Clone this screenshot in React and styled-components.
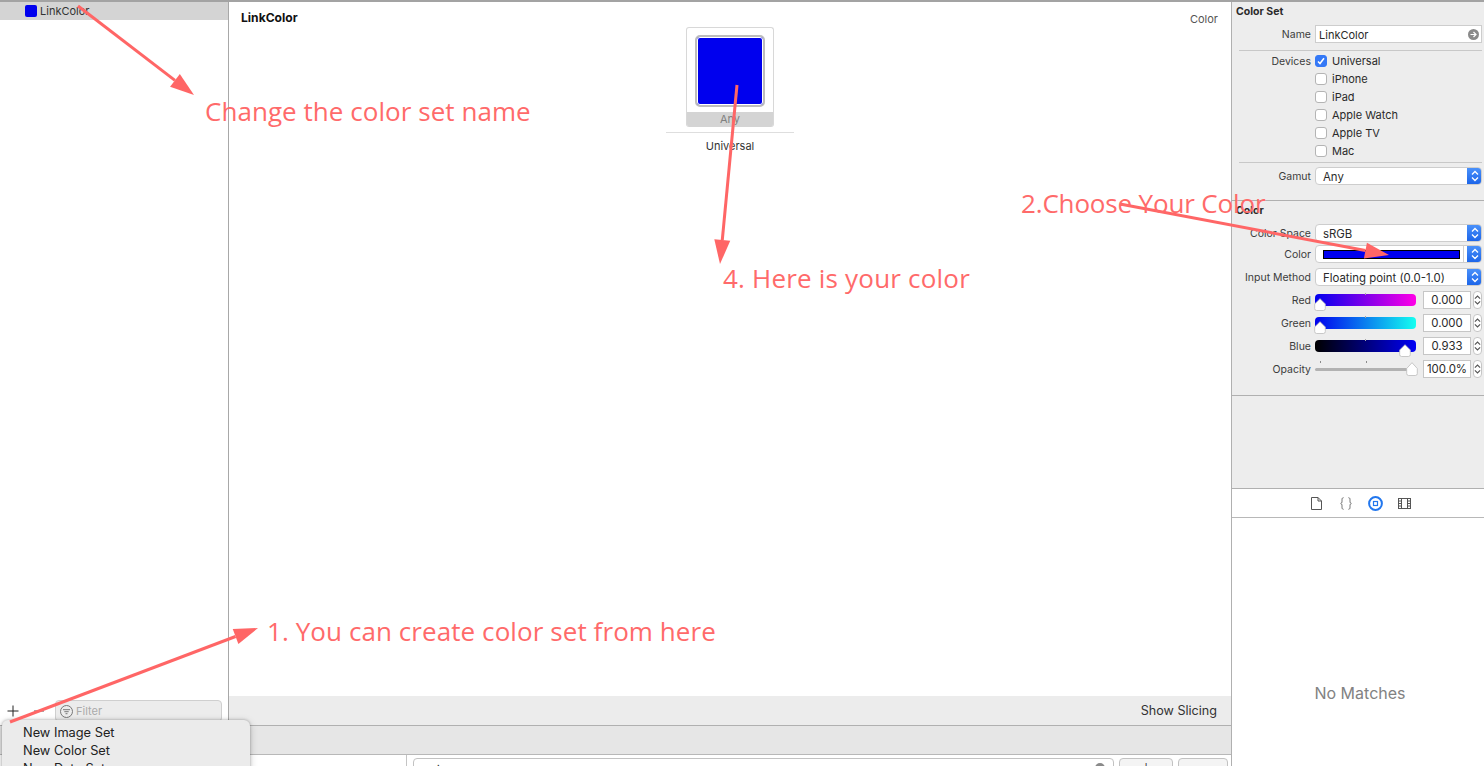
import React from 'react';
import styled, { createGlobalStyle } from 'styled-components';

const Global = createGlobalStyle`
  html, body { margin: 0; padding: 0; background: #fff; }
  body { font-family: "Inter", "Liberation Sans", sans-serif; font-size: 11px; color: #2a2a2a; }
  * { box-sizing: border-box; }
`;

const Page = styled.div`
  position: relative;
  width: 1484px;
  height: 766px;
  overflow: hidden;
  display: flex;
  flex-direction: column;
  border-top: 2px solid #a3a3a3;
`;
const Columns = styled.div`
  flex: 1;
  min-height: 0;
  display: flex;
`;
const Workspace = styled.div`
  width: 1232px;
  display: flex;
  flex-direction: column;
  border-right: 1px solid #b0b0b0;
`;
const Upper = styled.div`
  height: 724px;
  flex: none;
  display: flex;
  border-bottom: 1px solid #b0b0b0;
`;
const Sidebar = styled.aside`
  width: 229px;
  display: flex;
  flex-direction: column;
  justify-content: space-between;
  border-right: 1px solid #a8a8a8;
`;
const AssetRow = styled.div`
  height: 18px;
  background: #d4d4d4;
  display: flex;
  align-items: center;
  gap: 3px;
  padding-left: 25px;
  font-size: 11px;
  color: #333;
`;
const Swatch = styled.span`
  width: 12px;
  height: 12px;
  border-radius: 2px;
  background: #0000ee;
`;
const SidebarFooter = styled.div`
  height: 25px;
  padding: 0 6px 3px 7px;
  display: flex;
  align-items: center;
`;
const Glyph = styled.span`
  width: 26px;
  display: flex;
  color: #222;
`;
const FilterBox = styled.div`
  flex: 1;
  height: 22px;
  margin-left: -4px;
  display: flex;
  align-items: center;
  gap: 3px;
  padding-left: 4px;
  background: #ececec;
  border: 1px solid #cfcfcf;
  border-radius: 4px;
  color: #aaa;
  font-size: 11px;
`;
const Main = styled.main`
  flex: 1;
  display: flex;
  flex-direction: column;
  min-width: 0;
`;
const MainHeader = styled.div`
  height: 25px;
  padding: 5px 13px 0 12px;
  display: flex;
  justify-content: space-between;
  align-items: center;
  font-size: 11px;
`;
const HeaderTitle = styled.strong`
  font-size: 12.1px;
  font-weight: 700;
  color: #111;
`;
const HeaderKind = styled.span`
  color: #555;
  font-size: 11px;
  padding-top: 3px;
`;
const Canvas = styled.div`
  flex: 1;
  display: flex;
  flex-direction: column;
  align-items: center;
`;
const Well = styled.div`
  width: 88px;
  height: 100px;
  border: 1px solid #d8d8d8;
  border-bottom: 0;
  border-radius: 3px;
  overflow: hidden;
  display: flex;
  flex-direction: column;
  background: #fff;
`;
const WellBody = styled.div`
  flex: 1;
  padding: 7px 8px 0;
`;
const ColorChip = styled.div`
  width: 70px;
  height: 72px;
  background: #0000ee;
  border: 2px solid #bdbdbd;
  border-radius: 5px;
  box-shadow: inset 0 0 0 1px #fff;
`;
const WellLabel = styled.div`
  height: 15px;
  background: #d4d4d4;
  color: #808080;
  font-size: 11px;
  line-height: 15px;
  text-align: center;
`;
const CanvasRule = styled.div`
  width: 128px;
  height: 1px;
  margin-top: 5px;
  background: #dedede;
`;
const CanvasCaption = styled.div`
  margin-top: 6px;
  font-size: 11px;
  line-height: 15px;
  color: #333;
`;
const SlicingBar = styled.div`
  height: 29px;
  flex: none;
  background: #ececec;
  display: flex;
  align-items: center;
  justify-content: flex-end;
  padding-right: 14px;
  font-size: 12.6px;
  color: #333;
`;
const DebugBar = styled.div`
  height: 29px;
  flex: none;
  background: #e6e6e6;
  border-bottom: 1px solid #b8b8b8;
`;
const Console = styled.div`
  flex: 1;
  min-height: 0;
  display: flex;
  background: #fff;
  padding-left: 406px;
  overflow: hidden;
`;
const ConsoleRule = styled.div`
  width: 1px;
  background: #c4c4c4;
`;
const ConsoleTools = styled.div`
  flex: 1;
  display: flex;
  gap: 5px;
  padding: 3px 3px 0 6px;
`;
const ConsoleField = styled.div`
  flex: 1;
  height: 20px;
  border: 1px solid #c2c2c2;
  border-radius: 4px;
  padding: 4px 8px;
  display: flex;
  justify-content: space-between;
  font-size: 11px;
  line-height: 14px;
  color: #333;
`;
const ClearDot = styled.span`
  width: 10px;
  height: 10px;
  border-radius: 50%;
  background: #8a8a8a;
`;
const ConsoleButton = styled.div`
  width: ${p => p.$w}px;
  height: 20px;
  border: 1px solid #c2c2c2;
  border-radius: 4px;
  background: #f4f4f4;
  display: flex;
  justify-content: center;
  padding-top: 4px;
  font-size: 11px;
  line-height: 14px;
  color: #333;
`;

const Inspector = styled.aside`
  width: 252px;
  display: flex;
  flex-direction: column;
  background: #ededed;
`;
const Section = styled.section`
  height: ${p => p.$h}px;
  flex: none;
  padding: 3px 2px 0 0;
  border-bottom: 1px solid #b0b0b0;
`;
const SectionTitle = styled.h3`
  margin: 0 0 6px 4px;
  font-size: 10.5px;
  line-height: 14px;
  font-weight: 700;
  color: #2a2a2a;
`;
const Row = styled.div`
  display: grid;
  grid-template-columns: 79px 1fr;
  column-gap: 4px;
  align-items: ${p => (p.$top ? 'start' : 'center')};
  min-height: 18px;
  margin-top: ${p => p.$mt || 0}px;
`;
const Label = styled.label`
  display: block;
  height: 18px;
  text-align: right;
  font-size: 10.5px;
  line-height: 20px;
  color: #3c3c3c;
  white-space: nowrap;
`;
const TextField = styled.div`
  height: 18px;
  background: #fff;
  border: 1px solid #cdcdcd;
  padding: 1px 2px 0 3px;
  display: flex;
  align-items: center;
  justify-content: space-between;
  font-size: 11px;
  color: #2a2a2a;
`;
const Rule = styled.div`
  height: 1px;
  background: #c8c8c8;
  margin: ${p => p.$m || '7px 0 0'};
  margin-left: 7px;
`;
const CheckRow = styled.div`
  height: 18px;
  display: flex;
  align-items: center;
  gap: 5px;
  font-size: 11px;
  color: #2a2a2a;
`;
const Check = styled.span`
  width: 12px;
  height: 12px;
  border-radius: 3px;
  display: flex;
  align-items: center;
  justify-content: center;
  background: ${p => (p.$on ? '#3478f6' : '#fff')};
  border: 1px solid ${p => (p.$on ? '#3478f6' : '#b4b4b4')};
`;
const Select = styled.div`
  height: 18px;
  background: #fff;
  border: 1px solid #cdcdcd;
  border-radius: 4px;
  display: flex;
  align-items: center;
  position: relative;
  overflow: hidden;
  padding: 1px 0 0 7px;
  font-size: 11.4px;
  color: #2a2a2a;
`;
const SelectArrows = styled.span`
  position: absolute;
  right: -1px;
  top: -1px;
  bottom: -1px;
  width: 15px;
  background: linear-gradient(#4c93fb, #1a63e8);
  display: flex;
  align-items: center;
  justify-content: center;
`;
const ColorBar = styled.span`
  width: 137px;
  height: 9px;
  background: #0000ee;
  border: 1px solid #000;
`;
const ColorDivider = styled.span`
  position: absolute;
  right: 17px;
  top: 0;
  bottom: 0;
  width: 1px;
  background: #d0d0d0;
`;
const SliderGrid = styled.div`
  display: grid;
  grid-template-columns: 101px 55px 11px;
  align-items: center;
`;
const SliderWrap = styled.div`
  position: relative;
  height: 18px;
  display: flex;
  align-items: center;
`;
const Track = styled.div`
  width: 100%;
  height: 12px;
  border-radius: 4px;
  background: ${p => p.$bg};
`;
const ThinTrack = styled.div`
  width: 100%;
  height: 3px;
  border-radius: 2px;
  background: #b2b2b2;
`;
const Tick = styled.i`
  position: absolute;
  left: ${p => p.$x}px;
  top: ${p => p.$y}px;
  width: 1px;
  height: 2px;
  background: ${p => p.$c};
`;
const Thumb = styled.svg`
  position: absolute;
  left: ${p => p.$x}px;
  top: ${p => p.$y}px;
`;
const NumField = styled.div`
  height: 18px;
  margin-left: 7px;
  width: 48px;
  background: #fff;
  border: 1px solid #c6c6c6;
  font-size: 11.4px;
  line-height: 17px;
  text-align: center;
  color: #2a2a2a;
`;
const Stepper = styled.div`
  width: 9px;
  height: 18px;
  margin-left: 2px;
  background: #fff;
  border: 1px solid #c6c6c6;
  border-radius: 4px;
  display: flex;
  align-items: center;
  justify-content: center;
`;
const Spacer = styled.div`
  flex: none;
  height: 93px;
  border-bottom: 1px solid #b0b0b0;
`;
const TabBar = styled.nav`
  height: 29px;
  flex: none;
  background: #fff;
  border-bottom: 1px solid #b8b8b8;
  display: flex;
  align-items: center;
  padding: 1px 0 0 76px;
  gap: 13.5px;
`;
const TabIcon = styled.span`
  width: 16px;
  height: 16px;
  display: flex;
  align-items: center;
  justify-content: center;
`;
const Library = styled.div`
  flex: 1;
  background: #fff;
  display: flex;
  align-items: center;
  justify-content: center;
  padding: 102px 0 0 4px;
  font-size: 16px;
  color: #828282;
`;
const Menu = styled.div`
  position: absolute;
  left: 2px;
  top: 718px;
  width: 248px;
  height: 70px;
  padding-top: 4px;
  background: #ebebeb;
  border-radius: 6px;
  box-shadow: 0 0 3px rgba(0,0,0,.3), 0 2px 8px rgba(0,0,0,.18);
`;
const MenuItem = styled.div`
  height: 18px;
  line-height: 18px;
  padding-left: 21px;
  font-size: 12.8px;
  color: #222;
`;
const Note = styled.div`
  position: absolute;
  left: ${p => p.$x}px;
  top: ${p => p.$y}px;
  font-family: "Open Sans", "Liberation Sans", sans-serif;
  font-size: 26px;
  line-height: 30px;
  letter-spacing: ${p => p.$ls}px;
  color: #ff6a6a;
  white-space: nowrap;
`;
const ArrowLayer = styled.svg`
  position: absolute;
  left: 0;
  top: -2px;
  pointer-events: none;
`;

const Updown = ({ color = '#fff', w = 8 }) => (
  <svg width={w} height="12" viewBox="0 0 8 12" fill="none" stroke={color} strokeWidth="1.3" style={{ flex: 'none' }}>
    <path d="M1 4.5 4 1.5 7 4.5M1 7.5 4 10.5 7 7.5" />
  </svg>
);

const Arrow = ({ x1, y1, x2, y2 }) => {
  const a = Math.atan2(y2 - y1, x2 - x1);
  const len = 24, w = 8;
  const bx = x2 - Math.cos(a) * len, by = y2 - Math.sin(a) * len;
  const px = -Math.sin(a) * w, py = Math.cos(a) * w;
  return (
    <g fill="#ff6666" stroke="#ff6666">
      <line x1={x1} y1={y1} x2={bx} y2={by} strokeWidth="3" />
      <polygon stroke="none" points={`${x2},${y2} ${bx + px},${by + py} ${bx - px},${by - py}`} />
    </g>
  );
};

const devices = [['Universal', true], ['iPhone'], ['iPad'], ['Apple Watch'], ['Apple TV'], ['Mac']];
const sliders = [
  { name: 'Red', bg: 'linear-gradient(90deg,#0000ee,#ff00e6)', val: '0.000', x: -1 },
  { name: 'Green', bg: 'linear-gradient(90deg,#0000ee,#14fff0)', val: '0.000', x: -1 },
  { name: 'Blue', bg: 'linear-gradient(90deg,#000,#0000f5)', val: '0.933', x: 84 },
];

export default function App() {
  return (
    <Page>
      <Global />
      <Columns>
        <Workspace>
          <Upper>
            <Sidebar>
              <AssetRow><Swatch />LinkColor</AssetRow>
              <SidebarFooter>
                <Glyph>
                  <svg width="12" height="12" viewBox="0 0 12 12" stroke="#222" strokeWidth="1"><path d="M6 .5v11M.5 6h11" /></svg>
                </Glyph>
                <Glyph>
                  <svg width="12" height="12" viewBox="0 0 12 12" stroke="#555" strokeWidth="1"><path d="M1 6h10" /></svg>
                </Glyph>
                <FilterBox>
                  <svg width="13" height="13" viewBox="0 0 13 13" fill="none" stroke="#777" strokeWidth="1">
                    <circle cx="6.500" cy="6.500" r="6" /><path d="M3 4.700h7M4.300 6.700h4.400M5.500 8.700h2" />
                  </svg>
                  Filter
                </FilterBox>
              </SidebarFooter>
            </Sidebar>
            <Main>
              <MainHeader>
                <HeaderTitle>LinkColor</HeaderTitle>
                <HeaderKind>Color</HeaderKind>
              </MainHeader>
              <Canvas>
                <Well>
                  <WellBody><ColorChip /></WellBody>
                  <WellLabel>Any</WellLabel>
                </Well>
                <CanvasRule />
                <CanvasCaption>Universal</CanvasCaption>
              </Canvas>
              <SlicingBar>Show Slicing</SlicingBar>
            </Main>
          </Upper>
          <DebugBar />
          <Console>
            <ConsoleRule />
            <ConsoleTools>
              <ConsoleField>Quick<ClearDot /></ConsoleField>
              <ConsoleButton $w={54}>‹ | ›</ConsoleButton>
              <ConsoleButton $w={50}>Done</ConsoleButton>
            </ConsoleTools>
          </Console>
        </Workspace>
        <Inspector>
          <Section $h={199}>
            <SectionTitle>Color Set</SectionTitle>
            <Row>
              <Label>Name</Label>
              <TextField>
                LinkColor
                <svg width="11" height="11" viewBox="0 0 11 11">
                  <circle cx="5.500" cy="5.500" r="5.500" fill="#8a8a8a" />
                  <path d="M2.500 5.500h5.500M5.500 3 8 5.500 5.500 8" stroke="#fff" strokeWidth="1.200" fill="none" />
                </svg>
              </TextField>
            </Row>
            <Rule />
            <Row $mt={1} $top>
              <Label>Devices</Label>
              <div>
                {devices.map(([d, on]) => (
                  <CheckRow key={d}>
                    <Check $on={on}>
                      {on && (
                        <svg width="8" height="8" viewBox="0 0 8 8" fill="none" stroke="#fff" strokeWidth="1.500"><path d="M1 4.500 3 6.500 7 1.200" /></svg>
                      )}
                    </Check>
                    {d}
                  </CheckRow>
                ))}
              </div>
            </Row>
            <Rule $m="2px 0 4px" />
            <Row>
              <Label>Gamut</Label>
              <Select>Any<SelectArrows><Updown /></SelectArrows></Select>
            </Row>
          </Section>
          <Section $h={195}>
            <SectionTitle>Color</SectionTitle>
            <Row>
              <Label>Color Space</Label>
              <Select>sRGB<SelectArrows><Updown /></SelectArrows></Select>
            </Row>
            <Row $mt={3}>
              <Label>Color</Label>
              <Select><ColorBar /><ColorDivider /><SelectArrows><Updown /></SelectArrows></Select>
            </Row>
            <Row $mt={5}>
              <Label>Input Method</Label>
              <Select>Floating point (0.0-1.0)<SelectArrows><Updown /></SelectArrows></Select>
            </Row>
            {sliders.map(s => (
              <Row $mt={5} key={s.name}>
                <Label>{s.name}</Label>
                <SliderGrid>
                  <SliderWrap>
                    <Track $bg={s.bg} />
                    <Tick $x={50} $y={2} $c="#a8a8a8" />
                    <Thumb $x={s.x} $y={7} width="12" height="13" viewBox="0 0 12 13">
                      <path d="M6 .7 11.300 6v4.500a2 2 0 0 1-2 2H2.700a2 2 0 0 1-2-2V6Z" fill="#fff" stroke="#bdbdbd" strokeWidth=".8" />
                    </Thumb>
                  </SliderWrap>
                  <NumField>{s.val}</NumField>
                  <Stepper><Updown color="#555" w={7} /></Stepper>
                </SliderGrid>
              </Row>
            ))}
            <Row $mt={5}>
              <Label>Opacity</Label>
              <SliderGrid>
                <SliderWrap>
                  <ThinTrack />
                  <Tick $x={5} $y={1} $c="#8a8a8a" />
                  <Tick $x={51} $y={1} $c="#8a8a8a" />
                  <Thumb $x={91} $y={2} width="12" height="14" viewBox="0 0 12 14">
                    <path d="M6 .7 11.300 6.500v5a2 2 0 0 1-2 2H2.700a2 2 0 0 1-2-2v-5Z" fill="#fff" stroke="#bdbdbd" strokeWidth=".8" />
                  </Thumb>
                </SliderWrap>
                <NumField>100.0%</NumField>
                <Stepper><Updown color="#555" w={7} /></Stepper>
              </SliderGrid>
            </Row>
          </Section>
          <Spacer />
          <TabBar>
            <TabIcon>
              <svg width="11" height="13" viewBox="0 0 11 13" fill="none" stroke="#555" strokeWidth="1"><path d="M.5.500h6.500l3.500 3.500v8.500H.5ZM7 .5V4h3.500" /></svg>
            </TabIcon>
            <TabIcon>
              <svg width="12" height="13" viewBox="0 0 12 13" fill="none" stroke="#666" strokeWidth="1"><path d="M3.500.700C2 .7 2 2 2 3.500S2 6 .7 6.500C2 7 2 8 2 9.500s0 2.800 1.500 2.800M8.500.700C10 .7 10 2 10 3.500S10 6 11.300 6.500C10 7 10 8 10 9.500s0 2.800-1.500 2.800" /></svg>
            </TabIcon>
            <TabIcon>
              <svg width="15" height="15" viewBox="0 0 15 15" fill="none" stroke="#2277ee"><circle cx="7.500" cy="7.500" r="6.400" strokeWidth="2" /><rect x="5.500" y="5.500" width="4" height="4" strokeWidth="1.200" /></svg>
            </TabIcon>
            <TabIcon>
              <svg width="13" height="11" viewBox="0 0 13 11" fill="none" stroke="#555" strokeWidth="1"><rect x=".5" y=".5" width="12" height="10" /><path d="M3.500.5v10M9.500.5v10M.5 3h3M.5 5.500h3M.5 8h3M9.500 3h3M9.500 5.500h3M9.500 8h3" /></svg>
            </TabIcon>
          </TabBar>
          <Library>No Matches</Library>
        </Inspector>
      </Columns>

      <Menu>
        <MenuItem>New Image Set</MenuItem>
        <MenuItem>New Color Set</MenuItem>
        <MenuItem>New Data Set</MenuItem>
      </Menu>

      <ArrowLayer width="1484" height="766">
        <Arrow x1={78} y1={6} x2={194} y2={95} />
        <Arrow x1={10} y1={722} x2={258} y2={628} />
        <Arrow x1={1120} y1={204} x2={1389} y2={255} />
        <Arrow x1={737} y1={85} x2={720} y2={264} />
      </ArrowLayer>

      <Note $x={205} $y={94} $ls={0.05}>Change the color set name</Note>
      <Note $x={1021} $y={186} $ls={-0.16}>2.Choose Your Color</Note>
      <Note $x={723} $y={261} $ls={0.2}>4. Here is your color</Note>
      <Note $x={267} $y={614} $ls={0.08}>1. You can create color set from here</Note>
    </Page>
  );
}
